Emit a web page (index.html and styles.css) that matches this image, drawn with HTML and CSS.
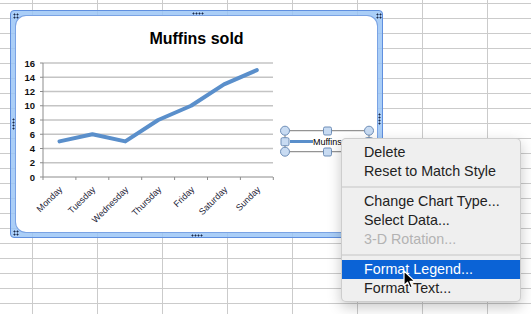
FILE: index.html
```html
<!DOCTYPE html>
<html lang="en">
<head>
  <meta charset="UTF-8" />
  <title>Muffins sold</title>
  <link rel="stylesheet" href="styles.css">
</head>
<body>

<!-- chart object floating over the sheet -->
<div class="chart">
  <span class="grip grip-tl"></span>
  <span class="grip grip-tm"></span>
  <span class="grip grip-tr"></span>
  <span class="grip grip-ml"></span>
  <span class="grip grip-mr"></span>
  <span class="grip grip-bl"></span>
  <span class="grip grip-bm"></span>
  <div class="chart-inner">
    <h2 class="chart-title">Muffins sold</h2>
    <svg class="plot" width="361" height="216" viewBox="16 16 361 216">
      <g class="grid">
        <line x1="43" y1="63" x2="273" y2="63"/>
        <line x1="43" y1="77.25" x2="273" y2="77.25"/>
        <line x1="43" y1="91.5" x2="273" y2="91.5"/>
        <line x1="43" y1="105.75" x2="273" y2="105.75"/>
        <line x1="43" y1="120" x2="273" y2="120"/>
        <line x1="43" y1="134.25" x2="273" y2="134.25"/>
        <line x1="43" y1="148.5" x2="273" y2="148.5"/>
        <line x1="43" y1="162.75" x2="273" y2="162.75"/>
      </g>
      <g class="axis">
        <line x1="43" y1="63" x2="43" y2="177"/>
        <line x1="40" y1="177" x2="273" y2="177"/>
        <line x1="40" y1="63" x2="43" y2="63"/>
        <line x1="40" y1="77.25" x2="43" y2="77.25"/>
        <line x1="40" y1="91.5" x2="43" y2="91.5"/>
        <line x1="40" y1="105.75" x2="43" y2="105.75"/>
        <line x1="40" y1="120" x2="43" y2="120"/>
        <line x1="40" y1="134.25" x2="43" y2="134.25"/>
        <line x1="40" y1="148.5" x2="43" y2="148.5"/>
        <line x1="40" y1="162.75" x2="43" y2="162.75"/>
        <line x1="43" y1="177" x2="43" y2="180"/>
        <line x1="75.9" y1="177" x2="75.9" y2="180"/>
        <line x1="108.8" y1="177" x2="108.8" y2="180"/>
        <line x1="141.7" y1="177" x2="141.7" y2="180"/>
        <line x1="174.6" y1="177" x2="174.6" y2="180"/>
        <line x1="207.5" y1="177" x2="207.5" y2="180"/>
        <line x1="240.4" y1="177" x2="240.4" y2="180"/>
        <line x1="273.3" y1="177" x2="273.3" y2="180"/>
      </g>
      <g class="ylabels">
        <text x="35" y="66.5">16</text>
        <text x="35" y="80.75">14</text>
        <text x="35" y="95">12</text>
        <text x="35" y="109.25">10</text>
        <text x="35" y="123.5">8</text>
        <text x="35" y="137.75">6</text>
        <text x="35" y="152">4</text>
        <text x="35" y="166.25">2</text>
        <text x="35" y="180.5">0</text>
      </g>
      <g class="xlabels">
        <text transform="translate(63 190) rotate(-45)">Monday</text>
        <text transform="translate(96 190) rotate(-45)">Tuesday</text>
        <text transform="translate(129 190) rotate(-45)">Wednesday</text>
        <text transform="translate(162 190) rotate(-45)">Thursday</text>
        <text transform="translate(195 190) rotate(-45)">Friday</text>
        <text transform="translate(228 190) rotate(-45)">Saturday</text>
        <text transform="translate(261 190) rotate(-45)">Sunday</text>
      </g>
      <polyline class="series" points="59.5,141.4 92.4,134.25 125.3,141.4 158.2,120 191.1,105.75 224,84.4 256.8,70.1"/>

      <!-- selected legend -->
      <g class="legend">
        <rect class="sel-box" x="285" y="130.7" width="84" height="21"/>
        <line class="legend-key" x1="290" y1="141.5" x2="313" y2="141.5"/>
        <text x="313" y="145">Muffins sold</text>
        <circle cx="285" cy="130.7" r="4.5"/>
        <circle cx="369" cy="130.7" r="4.5"/>
        <circle cx="285" cy="151.7" r="4.5"/>
        <circle cx="369" cy="151.7" r="4.5"/>
        <rect x="323.5" y="127" width="8" height="8" rx="1.5"/>
        <rect x="323.5" y="148" width="8" height="8" rx="1.5"/>
        <rect x="281" y="137.7" width="8" height="8" rx="1.5"/>
        <rect x="365" y="137.7" width="8" height="8" rx="1.5"/>
      </g>
    </svg>
  </div>
</div>

<!-- context menu -->
<ul class="menu">
  <li>Delete</li>
  <li>Reset to Match Style</li>
  <li class="sep"></li>
  <li>Change Chart Type...</li>
  <li>Select Data...</li>
  <li class="disabled">3-D Rotation...</li>
  <li class="sep"></li>
  <li class="active">Format Legend...</li>
  <li>Format Text...</li>
</ul>

<svg class="cursor" width="13" height="20" viewBox="0 0 13 20">
  <path d="M1 1 L1 15.5 L4.6 12.2 L7 17.8 L9.3 16.8 L7 11.4 L11.8 11.4 Z" fill="#000" stroke="#fff" stroke-width="1.2" stroke-linejoin="round"/>
</svg>

</body>
</html>
```

FILE: styles.css
```css
html, body {
  height: 100%;
}
body {
  margin: 0;
  overflow: hidden;
  position: relative;
  background-color: #fff;
  background-image:
    linear-gradient(to right, #cbcbcb 1px, transparent 1px),
    linear-gradient(to bottom, #cbcbcb 1px, transparent 1px);
  background-size: 65px 15px;
  background-position: 32px 3px;
  font-family: "Liberation Sans", Arial, sans-serif;
}

/* chart object */
.chart {
  position: absolute;
  left: 10px;
  top: 10px;
  width: 373px;
  height: 228px;
  box-sizing: border-box;
  padding: 5px;
  border: 1px solid #5f8fdf;
  border-radius: 4px;
  background: rgba(155, 198, 246, 0.85);
}
.chart-inner {
  position: relative;
  height: 100%;
  background: #fff;
  border-radius: 10px;
  box-shadow: 0 0 0 1px #7aa3e4;
}
.chart-title {
  margin: 0;
  padding-top: 13px;
  font-size: 16px;
  line-height: 20px;
  font-weight: bold;
  text-align: center;
  color: #000;
}
.plot {
  position: absolute;
  left: 0;
  top: 0;
  overflow: visible;
}
.grid line {
  stroke: #c4c4c4;
  stroke-width: 1.6;
}
.axis line {
  stroke: #8c8c8c;
  stroke-width: 1;
}
.ylabels text {
  font-size: 9.5px;
  font-weight: bold;
  text-anchor: end;
  fill: #111;
}
.xlabels text {
  font-size: 9px;
  text-anchor: end;
  fill: #1e1e38;
}
.series {
  fill: none;
  stroke: #5a8fcb;
  stroke-width: 4;
  stroke-linejoin: round;
  stroke-linecap: round;
}
.legend text {
  font-size: 9px;
  fill: #000;
}
.legend-key {
  stroke: #5a8fcb;
  stroke-width: 3;
}
.sel-box {
  fill: none;
  stroke: #7a7a7a;
  stroke-width: 1;
}
.legend circle,
.legend rect:not(.sel-box) {
  fill: #c8dbf2;
  stroke: #6f8fb8;
  stroke-width: 1;
}

/* resize grips on the frame */
.grip {
  position: absolute;
  background-image: radial-gradient(circle, #1b2a4a 0.9px, transparent 1.1px);
  background-size: 3px 3px;
}
.grip-tl { left: 2px; top: 2px; width: 6px; height: 6px; }
.grip-tr { right: 0; top: 2px; width: 6px; height: 6px; }
.grip-bl { left: 2px; bottom: 1px; width: 6px; height: 6px; }
.grip-tm { left: 181px; top: 1px; width: 12px; height: 3px; }
.grip-bm { left: 180px; bottom: 0; width: 12px; height: 3px; }
.grip-ml { left: 1px; top: 107px; width: 3px; height: 12px; }
.grip-mr { right: 1px; top: 102px; width: 3px; height: 12px; }

/* context menu */
.menu {
  position: absolute;
  left: 341px;
  top: 138px;
  width: 180px;
  margin: 0;
  padding: 4px 0 3px;
  list-style: none;
  box-sizing: border-box;
  background: #efefef;
  border: 1px solid rgba(0, 0, 0, 0.14);
  border-radius: 5px;
  box-shadow: 0 5px 14px rgba(0, 0, 0, 0.22);
  font-size: 14.3px;
  color: #222;
}
.menu li {
  height: 19px;
  line-height: 19px;
  padding-left: 22px;
  white-space: nowrap;
}
.menu li.sep {
  height: 11px;
  padding: 0;
  display: flex;
  align-items: center;
}
.menu li.sep::after {
  content: "";
  flex: 1;
  height: 2px;
  background: #dadada;
}
.menu li.disabled {
  color: #b3b3b3;
}
.menu li.active {
  background: #0b63d6;
  color: #fff;
}
.cursor {
  position: absolute;
  left: 403px;
  top: 270px;
}
```
